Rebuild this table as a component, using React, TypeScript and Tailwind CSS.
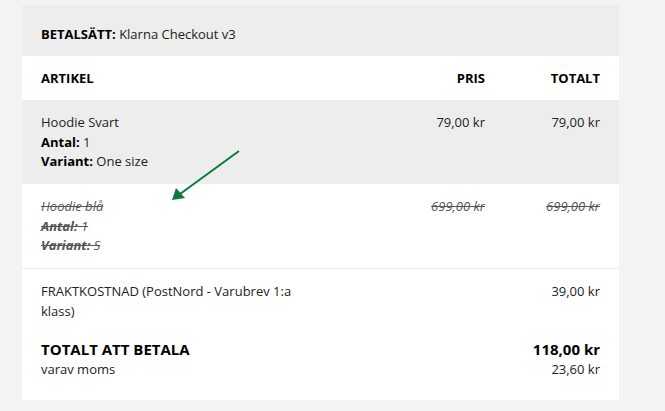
import React from "react";

const font = { fontFamily: '"Open Sans", "Noto Sans", Arial, sans-serif' };

export default function App() {
  return (
    <div className="relative w-[665px] h-[411px] bg-[#f3f3f3] pt-[5px] pl-[22px] overflow-hidden" style={font}>
      <div className="w-[597px] h-[395px] bg-white text-[13px] leading-[19.5px] text-[#222]">
        <div className="bg-[#ededed] px-[19px] pt-[20px] pb-[11.5px]">
          <span className="font-bold text-black">BETALSÄTT:</span> Klarna Checkout v3
        </div>
        <div className="grid grid-cols-[270px_1fr_115px] px-[19px] pt-[13px] pb-[11.5px] font-bold text-black">
          <div>ARTIKEL</div>
          <div className="text-right">PRIS</div>
          <div className="text-right">TOTALT</div>
        </div>
        <div className="grid grid-cols-[270px_1fr_115px] px-[19px] pt-[13px] pb-[12.5px] bg-[#ededed]">
          <div>
            <div>Hoodie Svart</div>
            <div><span className="font-bold text-black">Antal:</span> 1</div>
            <div><span className="font-bold text-black">Variant:</span> One size</div>
          </div>
          <div className="text-right">79,00 kr</div>
          <div className="text-right">79,00 kr</div>
        </div>
        <div className="grid grid-cols-[270px_1fr_115px] px-[19px] pt-[13px] pb-[12.5px] italic line-through text-[#555] border-b border-[#ebebeb]">
          <div>
            <div>Hoodie blå</div>
            <div><span className="font-bold">Antal:</span> 1</div>
            <div><span className="font-bold">Variant:</span> S</div>
          </div>
          <div className="text-right">699,00 kr</div>
          <div className="text-right">699,00 kr</div>
        </div>
        <div className="grid grid-cols-[270px_1fr_115px] px-[19px] pt-[13px]">
          <div>FRAKTKOSTNAD (PostNord - Varubrev 1:a klass)</div>
          <div></div>
          <div className="text-right">39,00 kr</div>
        </div>
        <div className="flex justify-between px-[19px] pt-[17px]">
          <div>
            <div className="font-bold text-black text-[15px] leading-[22px]">TOTALT ATT BETALA</div>
            <div>varav moms</div>
          </div>
          <div className="text-right">
            <div className="font-bold text-black text-[15px] leading-[22px]">118,00 kr</div>
            <div>23,60 kr</div>
          </div>
        </div>
      </div>
      <svg className="absolute left-0 top-0" width="665" height="411" viewBox="0 0 665 411">
        <line x1="239" y1="151" x2="180" y2="194" stroke="#0c7a3c" strokeWidth="2" />
        <polygon points="172,200 176,188 185,198" fill="#0c7a3c" />
      </svg>
    </div>
  );
}
